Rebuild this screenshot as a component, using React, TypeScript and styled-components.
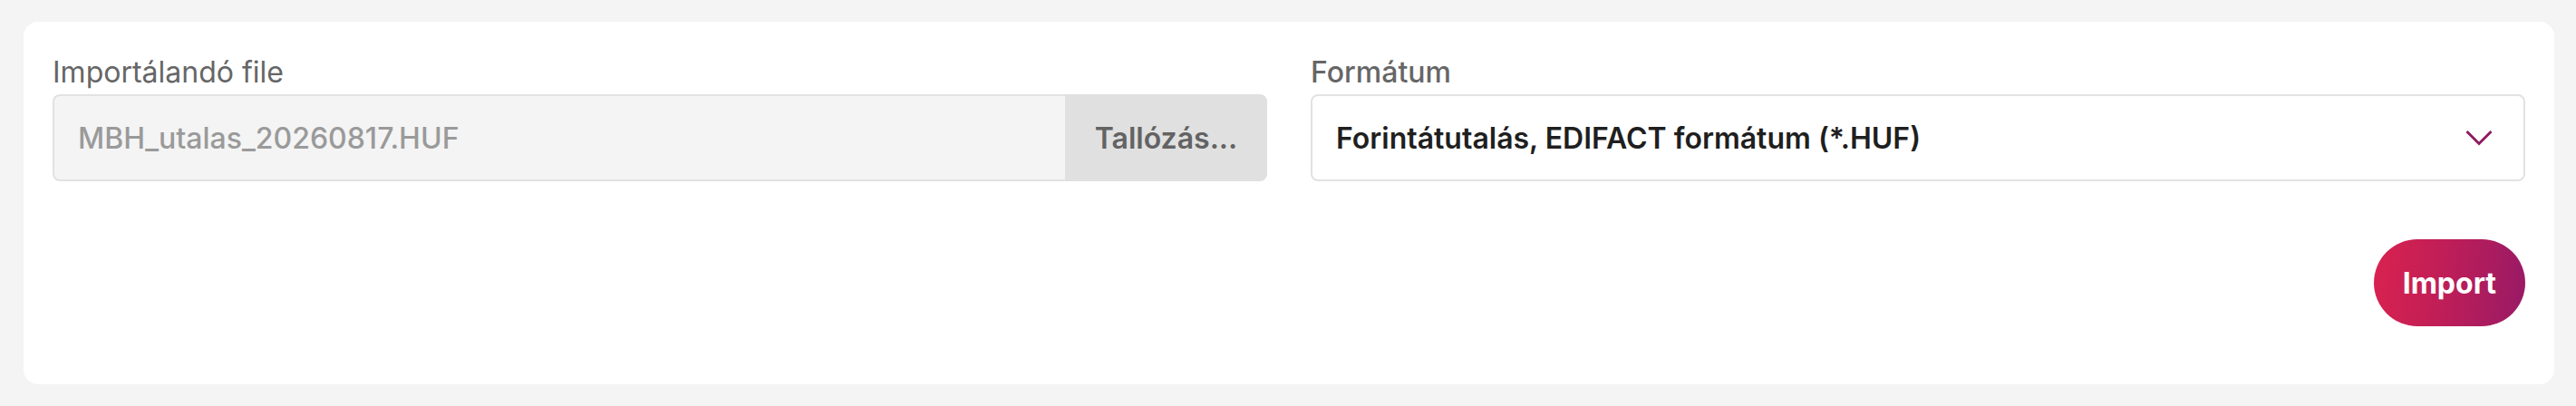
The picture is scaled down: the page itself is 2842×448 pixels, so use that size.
import React from "react";
import styled, { createGlobalStyle } from "styled-components";

const GlobalStyle = createGlobalStyle`
  html, body {
    margin: 0;
    padding: 0;
    background-color: #f4f4f4;
    font-family: Inter, "Noto Sans", "Liberation Sans", sans-serif;
  }
  * {
    box-sizing: border-box;
  }
`;

const Page = styled.div`
  padding: 24px 24px 24px 26px;
  min-height: 448px;
`;

const Card = styled.div`
  background-color: #ffffff;
  border-radius: 16px;
  padding: 32px 32px 64px;
`;

const FieldGrid = styled.div`
  display: grid;
  grid-template-columns: 1fr 1fr;
  gap: 48px;
`;

const Field = styled.div`
  display: flex;
  flex-direction: column;
`;

const Label = styled.label<{ $weight?: number }>`
  font-size: 32px;
  line-height: 48px;
  color: #666666;
  font-weight: ${({ $weight }) => $weight ?? 400};
`;

const FileGroup = styled.div`
  display: flex;
  height: 96px;
`;

const FileValue = styled.div`
  flex: 1;
  display: flex;
  align-items: center;
  padding: 0 26px;
  background-color: #f4f4f4;
  border: 2px solid #e2e2e2;
  border-right: none;
  border-radius: 8px 0 0 8px;
  font-size: 32px;
  font-weight: 500;
  color: #9a9a9a;
`;

const BrowseButton = styled.button`
  width: 223px;
  border: none;
  border-radius: 0 8px 8px 0;
  background-color: #e0e0e0;
  color: #636363;
  font-family: inherit;
  font-size: 32px;
  font-weight: 600;
  cursor: pointer;
`;

const Select = styled.div`
  height: 96px;
  display: flex;
  align-items: center;
  justify-content: space-between;
  padding: 0 34px 0 26px;
  border: 2px solid #e2e2e2;
  border-radius: 8px;
  background-color: #ffffff;
  font-size: 32px;
  font-weight: 600;
  color: #1f1f1f;
  cursor: pointer;
`;

const Chevron = styled.svg`
  width: 30px;
  height: 18px;
  flex-shrink: 0;
`;

const Actions = styled.div`
  display: flex;
  justify-content: flex-end;
  margin-top: 64px;
`;

const PrimaryButton = styled.button`
  height: 96px;
  padding: 0 32px;
  border: none;
  border-radius: 48px;
  background: linear-gradient(95deg, #d9224f 0%, #c01e57 45%, #981a66 100%);
  color: #ffffff;
  font-family: inherit;
  font-size: 32px;
  font-weight: 700;
  cursor: pointer;
`;

const App: React.FC = () => {
  return (
    <>
      <GlobalStyle />
      <Page>
        <Card>
          <FieldGrid>
            <Field>
              <Label>Importálandó file</Label>
              <FileGroup>
                <FileValue>MBH_utalas_20260817.HUF</FileValue>
                <BrowseButton>Tallózás...</BrowseButton>
              </FileGroup>
            </Field>
            <Field>
              <Label $weight={500}>Formátum</Label>
              <Select>
                <span>Forintátutalás, EDIFACT formátum (*.HUF)</span>
                <Chevron viewBox="0 0 30 18" fill="none">
                  <polyline
                    points="1.5,2 15,15.5 28.5,2"
                    stroke="#8e1b5f"
                    strokeWidth="3"
                  />
                </Chevron>
              </Select>
            </Field>
          </FieldGrid>
          <Actions>
            <PrimaryButton>Import</PrimaryButton>
          </Actions>
        </Card>
      </Page>
    </>
  );
};

export default App;
